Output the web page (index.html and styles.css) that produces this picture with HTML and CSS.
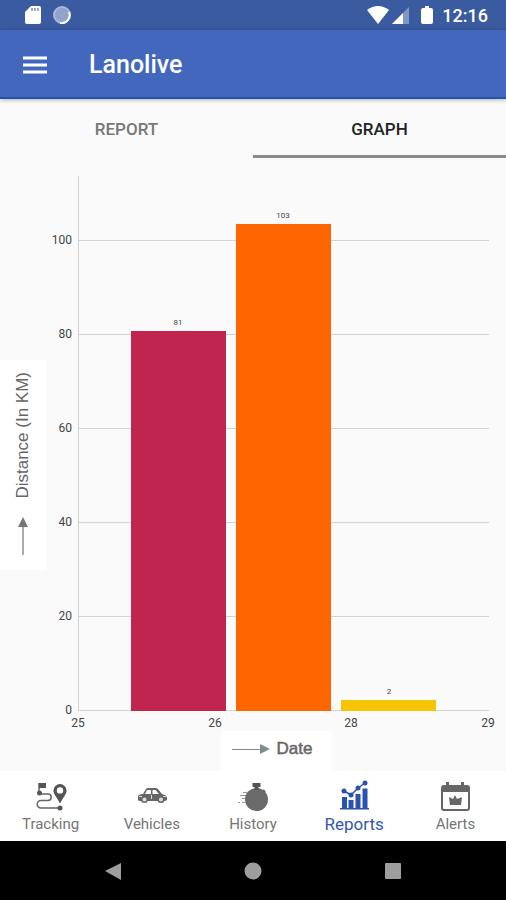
FILE: index.html
```html
<!DOCTYPE html>
<html lang="en">
<head>
    <meta charset="UTF-8">
    <meta name="viewport" content="width=device-width, initial-scale=1.0">
    <title>Lanolive</title>
    <link rel="stylesheet" href="styles.css">
</head>
<body>
    <div class="status-bar">
        <svg width="16" height="20" viewBox="0 0 16 20"><path fill="#fff" d="M6 1h8a2 2 0 0 1 2 2v14a2 2 0 0 1-2 2H2a2 2 0 0 1-2-2V7z"/><path stroke="#7d92c2" stroke-width="1.500" d="M7 3v3M10 3v3M13 3v3"/></svg>
        <svg class="sync" width="18" height="18" viewBox="0 0 18 18"><circle cx="9" cy="9" r="8" fill="#8fa3cc" stroke="#a9b8da" stroke-width="2"/><path d="M16 6a8 8 0 0 1-9 11" fill="none" stroke="#fff" stroke-width="2"/></svg>
        <div class="status-right">
            <svg width="22" height="18" viewBox="0 0 22 18"><path fill="#fff" d="M0 4Q11-4 22 4L11 18z"/></svg>
            <svg width="18" height="18" viewBox="0 0 18 18"><path fill="#8296c5" d="M17 1v17H0z"/><path fill="#fff" d="M11 7v11H0z"/></svg>
            <svg class="battery" width="12" height="20" viewBox="0 0 12 20"><path fill="#fff" d="M4 1h4v2h2a2 2 0 0 1 2 2v12a2 2 0 0 1-2 2H2a2 2 0 0 1-2-2V5a2 2 0 0 1 2-2h2z"/></svg>
            <span class="clock">12:16</span>
        </div>
    </div>

    <header class="app-bar">
        <button class="menu-btn" aria-label="Menu">
            <svg width="24" height="18" viewBox="0 0 24 18"><path stroke="#fff" stroke-width="3" d="M0 2h24M0 9h24M0 16h24"/></svg>
        </button>
        <h1>Lanolive</h1>
    </header>

    <div class="tabs">
        <button class="tab">REPORT</button>
        <button class="tab active">GRAPH</button>
    </div>

    <main class="chart">
        <div class="y-title">
            <svg width="10" height="38" viewBox="0 0 10 38"><path stroke="#aaa" stroke-width="2" d="M5 8v30"/><path fill="#777" d="M5 0l5 10H0z"/></svg>
            <span>Distance (In KM)</span>
        </div>

        <svg class="plot" viewBox="0 0 460 561">
            <g class="grid-lines">
                <path d="M32 70.5h411M32 164.5h411M32 258.5h411M32 352.5h411M32 446.5h411M32 540.5h411M32.500 6v535"/>
            </g>
            <rect x="85" y="161" width="95" height="380" fill="#c0254f"/>
            <rect x="190" y="54" width="95" height="487" fill="#ff6600"/>
            <rect x="295" y="530" width="95" height="11" fill="#f5c404"/>
            <g class="values">
                <text x="132" y="155">81</text>
                <text x="237" y="48">103</text>
                <text x="343" y="524">2</text>
            </g>
            <g class="y-labels">
                <text x="26" y="74">100</text>
                <text x="26" y="168">80</text>
                <text x="26" y="262">60</text>
                <text x="26" y="356">40</text>
                <text x="26" y="450">20</text>
                <text x="26" y="544">0</text>
            </g>
            <g class="x-labels">
                <text x="32" y="557">25</text>
                <text x="169" y="557">26</text>
                <text x="305" y="557">28</text>
                <text x="442" y="557">29</text>
            </g>
        </svg>

        <div class="x-title">
            <svg width="38" height="10" viewBox="0 0 38 10"><path stroke="#7f8c8d" stroke-width="1" d="M0 5.500h30"/><path fill="#7f8c8d" d="M38 5L28 0v10z"/></svg>
            <span>Date</span>
        </div>
    </main>

    <nav class="bottom-nav">
        <a href="#tracking">
            <svg width="32" height="32" viewBox="0 0 32 32">
                <path fill="none" stroke="#666" stroke-width="1.500" d="M4 3v11h9a3.200 3.200 0 0 1 0 6.400H6a3.800 3.800 0 0 0 0 7.600h19"/>
                <rect x="4" y="3" width="7" height="5" fill="#555"/>
                <circle cx="4.500" cy="13" r="2.500" fill="#555"/><circle cx="25" cy="28" r="2.500" fill="#555"/>
                <path fill="#555" fill-rule="evenodd" d="M25 4a6.500 6.500 0 0 1 6.500 6.500c0 4-3.500 7-6.500 13-3-6-6.500-9-6.500-13A6.500 6.500 0 0 1 25 4zm0 3.200a3.200 3.200 0 1 0 0 6.400 3.200 3.200 0 0 0 0-6.400z"/>
            </svg>
            <span>Tracking</span>
        </a>
        <a href="#vehicles">
            <svg width="32" height="32" viewBox="0 0 32 32">
                <path fill="#666" d="M2 16q1-2 5-2l3-5q1-1 2-1h7q2 0 3 1l4 5q5 1 5 4v2l-2 1H3l-1-1z"/>
                <path fill="#fff" d="M9 14l2-4h4v4zM16.500 10h3l3.500 4h-6.500z"/>
                <path stroke="#ddd" d="M3 16.500h3M27 16.500h3M15.500 15v4"/>
                <circle cx="8.500" cy="19.500" r="2.800" fill="#ddd" stroke="#666" stroke-width="1.500"/>
                <circle cx="25" cy="19.500" r="2.800" fill="#ddd" stroke="#666" stroke-width="1.500"/>
            </svg>
            <span>Vehicles</span>
        </a>
        <a href="#history">
            <svg width="32" height="32" viewBox="0 0 32 32">
                <circle cx="19.500" cy="19.500" r="11.500" fill="#6b6b6b"/>
                <path fill="#555" d="M15.500 3h8v4h-2v3h-4V7h-2z"/>
                <path stroke="#666" stroke-width="2" d="M26 10l2 2"/>
                <path stroke="#999" stroke-width="1" d="M6 12.500h4M3 15.500h6M5 18.500h3M1 22.500h2M5 22.500h4"/>
            </svg>
            <span>History</span>
        </a>
        <a href="#reports" class="active">
            <svg width="32" height="32" viewBox="0 0 32 32">
                <path fill="#2a52b0" d="M4 17h5v11H4zM10.500 20h5v8h-5zM17.500 14h5v14h-5zM24.500 8.500h5V28h-5zM2 28h29v1.500H2z"/>
                <path fill="none" stroke="#2a52b0" stroke-width="1.500" d="M6 11l7 4 7-7 7-5"/>
                <g fill="#2a52b0"><circle cx="6" cy="11" r="2.500"/><circle cx="13" cy="15" r="2.500"/><circle cx="20" cy="8" r="2.500"/><circle cx="27" cy="3" r="2.500"/></g>
            </svg>
            <span>Reports</span>
        </a>
        <a href="#alerts">
            <svg width="32" height="32" viewBox="0 0 32 32">
                <rect x="3" y="6" width="27" height="24" rx="2" fill="none" stroke="#666" stroke-width="2"/>
                <path fill="#666" d="M3 6h27v6H3zM7 2h3v5H7zM22 2h3v5h-3z"/>
                <path fill="#666" d="M10 17l4 2 2-4 2 4 5-2-1 8H11z"/>
            </svg>
            <span>Alerts</span>
        </a>
    </nav>

    <div class="system-bar">
        <button aria-label="Back"><svg width="18" height="18" viewBox="0 0 18 18"><path fill="#9e9e9e" d="M17 1v17L1 9z"/></svg></button>
        <button aria-label="Home"><svg width="18" height="18" viewBox="0 0 18 18"><circle cx="9" cy="9" r="8.500" fill="#9e9e9e"/></svg></button>
        <button aria-label="Recent apps"><svg width="18" height="18" viewBox="0 0 18 18"><rect x="1" y="1" width="16" height="16" rx="1" fill="#9e9e9e"/></svg></button>
    </div>
</body>
</html>
```
FILE: styles.css
```css
* {
    box-sizing: border-box;
}
body {
    margin: 0;
    min-height: 100vh;
    display: flex;
    flex-direction: column;
    font-family: Roboto, sans-serif;
    background: #fafafa;
}
svg {
    display: block;
}
button {
    border: none;
    padding: 0;
    background: none;
    font-family: inherit;
    cursor: pointer;
}
.status-bar {
    display: flex;
    align-items: center;
    height: 30px;
    padding: 0 18px 0 25px;
    background: #3a5ba0;
    color: white;
}
.sync {
    margin-left: 12px;
}
.status-right {
    display: flex;
    align-items: center;
    margin-left: auto;
    gap: 3px;
}
.battery {
    margin: 0 6px 0 8px;
}
.clock {
    font-size: 18px;
    font-weight: 500;
}
.app-bar {
    display: flex;
    align-items: center;
    height: 69px;
    padding: 2px 23px 0;
    gap: 42px;
    background: #4267bd;
    border-bottom: 2px solid #1c56a8;
    box-shadow: 0 1px 4px rgba(0, 0, 0, 0.3);
    color: white;
}
.app-bar h1 {
    margin: 0;
    font-size: 25px;
    font-weight: 500;
    line-height: 32px;
}
.tabs {
    display: flex;
    height: 59px;
}
.tab {
    flex: 1;
    padding-top: 4px;
    border-bottom: 3px solid transparent;
    font-size: 17px;
    font-weight: 500;
    color: #777;
}
.tab.active {
    color: #222;
    border-bottom-color: #8b8b8b;
}
.chart {
    flex: 1;
    display: grid;
    grid-template-columns: 46px 1fr;
    grid-template-rows: 1fr 40px;
}
.y-title {
    grid-row: 1 / 3;
    align-self: center;
    display: flex;
    flex-direction: column-reverse;
    align-items: center;
    justify-content: center;
    gap: 18px;
    height: 210px;
    padding-bottom: 2px;
    background: white;
    font-family: "Liberation Sans", Arial, sans-serif;
    font-size: 17px;
    color: #666;
}
.y-title svg {
    flex: none;
}
.y-title span {
    writing-mode: vertical-rl;
    transform: rotate(180deg);
    white-space: nowrap;
}
.plot {
    width: 100%;
    margin-top: 12px;
    font-size: 12px;
    fill: #444;
}
.grid-lines {
    stroke: #d2d2d2;
    stroke-width: 1px;
}
.values {
    font-size: 8px;
    text-anchor: middle;
}
.y-labels {
    text-anchor: end;
}
.x-labels {
    text-anchor: middle;
}
.x-title {
    justify-self: center;
    display: flex;
    align-items: center;
    justify-content: center;
    gap: 7px;
    width: 111px;
    padding: 0 8px 5px 0;
    background: white;
    font-family: "Liberation Sans", Arial, sans-serif;
    font-size: 17px;
    color: #666;
    -webkit-text-stroke: 0.5px #666;
}
.bottom-nav {
    display: flex;
    height: 70px;
    background: white;
}
.bottom-nav a {
    flex: 1;
    display: flex;
    flex-direction: column;
    align-items: center;
    padding-top: 9px;
    font-size: 15px;
    line-height: 24px;
    color: #757575;
    text-decoration: none;
}
.bottom-nav a.active {
    font-size: 17px;
    color: #3457b0;
}
.system-bar {
    display: flex;
    justify-content: center;
    align-items: center;
    gap: 122px;
    height: 59px;
    background: black;
}
```
